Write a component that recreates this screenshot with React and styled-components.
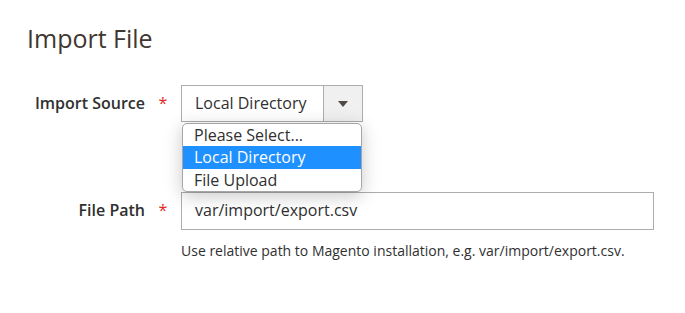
import React from "react";
import styled, { createGlobalStyle } from "styled-components";

const Global = createGlobalStyle`
  html, body { margin: 0; padding: 0; background: #fff; }
  body { font-family: "Open Sans", "Liberation Sans", sans-serif; color: #303030; }
`;

const Page = styled.div`
  width: 685px;
  height: 313px;
  padding: 19px 0 0 27px;
  box-sizing: border-box;
  overflow: hidden;
`;

const Title = styled.h2`
  margin: 0 0 28px;
  font-size: 25px;
  font-weight: 400;
  line-height: 38px;
  color: #41362f;
`;

const Field = styled.div`
  display: flex;
  align-items: flex-start;
  margin-top: ${(p) => p.$top || 0}px;
  position: relative;
`;

const Label = styled.label`
  width: 118px;
  text-align: right;
  font-size: 16px;
  font-weight: 600;
  line-height: 36px;
  color: #303030;
  flex-shrink: 0;
`;

const Star = styled.span`
  width: 36px;
  text-align: center;
  color: #e22626;
  font-size: 16px;
  line-height: 36px;
  flex-shrink: 0;
`;

const Control = styled.div`
  display: flex;
  flex-direction: column;
  position: relative;
`;

const Select = styled.div`
  width: 182px;
  height: 37px;
  box-sizing: border-box;
  border: 1px solid #adadad;
  display: flex;
  background: #fff;
`;

const SelectValue = styled.div`
  flex: 1;
  padding-left: 13px;
  font-size: 16px;
  line-height: 35px;
  color: #303030;
`;

const Arrow = styled.div`
  width: 38px;
  border-left: 1px solid #adadad;
  background: #f0f0f0;
  display: flex;
  align-items: center;
  justify-content: center;
`;

const Menu = styled.ul`
  position: absolute;
  top: 38px;
  left: 1px;
  width: 180px;
  margin: 0;
  padding: 0;
  list-style: none;
  background: #fff;
  border: 1px solid #a6a6a6;
  border-radius: 5px;
  box-shadow: 0 4px 18px rgba(0, 0, 0, 0.22);
  overflow: hidden;
  z-index: 2;
  box-sizing: border-box;
`;

const Option = styled.li`
  height: ${(p) => (p.$active ? 23 : 22)}px;
  line-height: ${(p) => (p.$active ? 23 : 22)}px;
  padding-left: 11px;
  font-size: 16px;
  color: ${(p) => (p.$active ? "#fff" : "#303030")};
  background: ${(p) => (p.$active ? "#1e90ff" : "transparent")};
`;

const Input = styled.div`
  width: 473px;
  height: 38px;
  box-sizing: border-box;
  border: 1px solid #adadad;
  padding-left: 13px;
  font-size: 16px;
  line-height: 35px;
  color: #303030;
`;

const Note = styled.div`
  margin-top: 11px;
  font-size: 14px;
  line-height: 20px;
  color: #303030;
`;

export default function App() {
  return (
    <Page>
      <Global />
      <Title>Import File</Title>
      <Field>
        <Label>Import Source</Label>
        <Star>*</Star>
        <Control>
          <Select>
            <SelectValue>Local Directory</SelectValue>
            <Arrow>
              <svg width="10" height="6" viewBox="0 0 10 6">
                <path d="M0 0 L10 0 L5 6 Z" fill="#514943" />
              </svg>
            </Arrow>
          </Select>
          <Menu>
            <Option>Please Select...</Option>
            <Option $active>Local Directory</Option>
            <Option>File Upload</Option>
          </Menu>
        </Control>
      </Field>
      <Field $top={70}>
        <Label>File Path</Label>
        <Star>*</Star>
        <Control>
          <Input>var/import/export.csv</Input>
          <Note>Use relative path to Magento installation, e.g. var/import/export.csv.</Note>
        </Control>
      </Field>
    </Page>
  );
}
